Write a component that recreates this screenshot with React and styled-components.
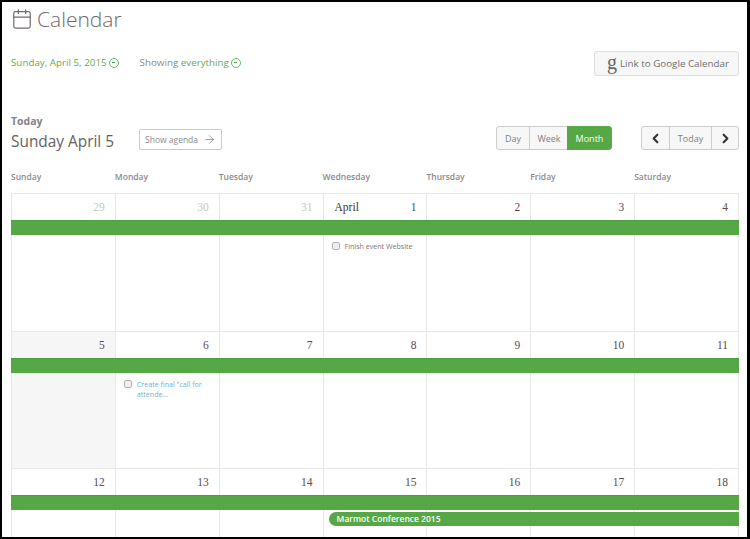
import React from 'react';
import styled, { createGlobalStyle } from 'styled-components';
import { Calendar, ChevronLeft, ChevronRight, ArrowRight } from 'lucide-react';

const GlobalStyle = createGlobalStyle`
  html, body {
    margin: 0;
    padding: 0;
    background: #fff;
  }
  body {
    font-family: "Open Sans", "Liberation Sans", sans-serif;
  }
`;

const weekdays = ['Sunday', 'Monday', 'Tuesday', 'Wednesday', 'Thursday', 'Friday', 'Saturday'];

const weeks = [
  {
    days: [
      { n: 29, muted: true },
      { n: 30, muted: true },
      { n: 31, muted: true },
      { n: 1, month: 'April' },
      { n: 2 },
      { n: 3 },
      { n: 4 },
    ],
    tasks: { 3: { text: 'Finish event Website' } },
  },
  {
    days: [{ n: 5, today: true }, { n: 6 }, { n: 7 }, { n: 8 }, { n: 9 }, { n: 10 }, { n: 11 }],
    tasks: { 1: { text: 'Create final "call for attende...', link: true } },
  },
  {
    days: [{ n: 12 }, { n: 13 }, { n: 14 }, { n: 15 }, { n: 16 }, { n: 17 }, { n: 18 }],
    tasks: {},
    event: 'Marmot Conference 2015',
  },
];

const App = () => {
  return (
    <>
      <GlobalStyle />
      <Frame>
        <TitleRow>
          <Calendar size={22} strokeWidth={1.3} color="#6f6a6d" />
          <Title>Calendar</Title>
        </TitleRow>

        <FilterRow>
          <Filters>
            <Filter>
              <Green>Sunday, April 5, 2015</Green>
              <Toggle />
            </Filter>
            <Filter>
              <span>
                Showing <Green>everything</Green>
              </span>
              <Toggle />
            </Filter>
          </Filters>
          <GoogleButton>
            <GoogleG>g</GoogleG>
            Link to Google Calendar
          </GoogleButton>
        </FilterRow>

        <Toolbar>
          <TodayBlock>
            <TodayLabel>Today</TodayLabel>
            <DateRow>
              <DateTitle>Sunday April 5</DateTitle>
              <AgendaButton>
                Show agenda
                <ArrowRight size={13} strokeWidth={1.4} color="#77777a" />
              </AgendaButton>
            </DateRow>
          </TodayBlock>
          <Controls>
            <ButtonGroup>
              <GroupButton $w={32}>Day</GroupButton>
              <GroupButton $w={39}>Week</GroupButton>
              <GroupButton $w={43} $active>Month</GroupButton>
            </ButtonGroup>
            <ButtonGroup>
              <GroupButton $w={27}>
                <ChevronLeft size={15} strokeWidth={3.4} color="#333" />
              </GroupButton>
              <GroupButton $w={42}>Today</GroupButton>
              <GroupButton $w={27}>
                <ChevronRight size={15} strokeWidth={3.4} color="#333" />
              </GroupButton>
            </ButtonGroup>
          </Controls>
        </Toolbar>

        <WeekdayRow>
          {weekdays.map((d) => (
            <Weekday key={d}>{d}</Weekday>
          ))}
        </WeekdayRow>

        <Month>
          {weeks.map((week) => (
            <Week key={week.days[0].n}>
              {week.days.map((d) => (
                <DayHead key={d.n} $today={d.today}>
                  {d.month && <MonthName>{d.month}</MonthName>}
                  <DayNumber $muted={d.muted}>{d.n}</DayNumber>
                </DayHead>
              ))}
              <AllDayBar />
              {week.event && <EventBar>{week.event}</EventBar>}
              {week.days.map((d, i) => (
                <DayBody key={d.n} $today={d.today}>
                  {week.tasks[i] && (
                    <Task $link={week.tasks[i].link}>
                      <Check />
                      <span>{week.tasks[i].text}</span>
                    </Task>
                  )}
                </DayBody>
              ))}
            </Week>
          ))}
        </Month>
      </Frame>
    </>
  );
};

export default App;

const Frame = styled.div`
  width: 750px;
  height: 539px;
  box-sizing: border-box;
  overflow: hidden;
  border: solid #000;
  border-width: 2px 3px 2px 2px;
  padding: 0 8px 0 9px;
  background: #fff;
  color: #6d696c;
`;

const TitleRow = styled.div`
  display: flex;
  align-items: center;
  gap: 4px;
  height: 34px;
`;

const Title = styled.h1`
  margin: 0;
  font-size: 21px;
  line-height: 34px;
  font-weight: 300;
  color: #6f6a6d;
`;

const FilterRow = styled.div`
  display: flex;
  justify-content: space-between;
  align-items: center;
  height: 25px;
  margin-top: 15px;
`;

const Filters = styled.div`
  display: flex;
  gap: 21px;
  margin-top: -2px;
`;

const Filter = styled.div`
  display: flex;
  align-items: center;
  gap: 2px;
  font-size: 9.8px;
  color: #8a8a8a;
`;

const Green = styled.span`
  color: #6aa84f;
`;

const Toggle = styled.span`
  width: 8px;
  height: 8px;
  border: 1px solid #62bb62;
  border-radius: 50%;
  display: flex;
  align-items: center;
  justify-content: center;

  &::after {
    content: '';
    width: 3px;
    height: 1px;
    background: #4f9f4f;
  }
`;

const GoogleButton = styled.div`
  width: 145px;
  height: 25px;
  box-sizing: border-box;
  display: flex;
  align-items: center;
  justify-content: flex-end;
  gap: 3px;
  padding-right: 9px;
  background: #f7f7f7;
  border: 1px solid #ddd;
  border-radius: 3px;
  font-size: 9.8px;
  white-space: nowrap;
  color: #6f6f6f;
`;

const GoogleG = styled.span`
  font-family: "Liberation Serif", serif;
  font-size: 20px;
  line-height: 18px;
  margin-top: -4px;
  color: #666;
`;

const Toolbar = styled.div`
  display: flex;
  justify-content: space-between;
  align-items: flex-end;
  height: 37px;
  margin-top: 37px;
`;

const TodayBlock = styled.div`
  align-self: flex-start;
  display: flex;
  flex-direction: column;
  padding-top: 1px;
`;

const TodayLabel = styled.div`
  font-size: 10.5px;
  line-height: 14px;
  font-weight: 700;
  color: #85828a;
`;

const DateRow = styled.div`
  display: flex;
  align-items: flex-start;
  gap: 25px;
`;

const DateTitle = styled.div`
  font-size: 15.4px;
  line-height: 28px;
  color: #646163;
`;

const AgendaButton = styled.div`
  width: 83px;
  height: 21px;
  margin-top: 1px;
  box-sizing: border-box;
  display: flex;
  align-items: center;
  justify-content: space-between;
  padding: 0 5px;
  border: 1px solid #c9c9cf;
  border-radius: 2px;
  font-size: 8.5px;
  color: #8b8b8b;
`;

const Controls = styled.div`
  display: flex;
  gap: 29px;
`;

const ButtonGroup = styled.div`
  display: flex;
  height: 24px;
  box-sizing: border-box;
  border: 1px solid #ccc;
  border-radius: 3px;
  background: #f7f7f7;
`;

const GroupButton = styled.div`
  width: ${(p) => p.$w}px;
  box-sizing: border-box;
  display: flex;
  align-items: center;
  justify-content: center;
  font-size: 9px;
  color: ${(p) => (p.$active ? '#fff' : '#808080')};
  background: ${(p) => (p.$active ? '#55a845' : 'transparent')};
  box-shadow: ${(p) => (p.$active ? '0 0 0 1px #55a845' : 'none')};
  border-radius: ${(p) => (p.$active ? '0 3px 3px 0' : '0')};
  border-left: ${(p) => (p.$active ? '0' : '1px solid #ccc')};

  &:first-child {
    border-left: 0;
  }
`;

const WeekdayRow = styled.div`
  display: grid;
  grid-template-columns: repeat(7, 103.86px);
  margin-top: 20px;
  height: 23px;
`;

const Weekday = styled.div`
  font-size: 8.5px;
  line-height: 14px;
  font-weight: 600;
  color: #8c8a90;
`;

const Month = styled.div`
  width: 728px;
  box-sizing: border-box;
  border-top: 1px solid #e8e8e8;
  border-right: 1px solid #e8e8e8;
`;

const Week = styled.div`
  display: grid;
  grid-template-columns: repeat(7, 1fr);
  grid-template-rows: 26px 15px auto;
  border-bottom: 1px solid #e8e8e8;
`;

const DayHead = styled.div`
  display: flex;
  justify-content: space-between;
  align-items: center;
  padding: 0 10px 0 11px;
  border-left: 1px solid #e8e8e8;
  background: ${(p) => (p.$today ? '#f6f6f6' : '#fff')};
`;

const MonthName = styled.span`
  font-family: "Liberation Serif", serif;
  font-size: 11.5px;
  color: #3a3436;
`;

const DayNumber = styled.span`
  font-family: "Liberation Serif", serif;
  font-size: 11.5px;
  margin-left: auto;
  color: ${(p) => (p.$muted ? '#c4c4c8' : '#5c4a54')};
`;

const AllDayBar = styled.div`
  grid-column: 1 / -1;
  margin-right: -1px;
  background: #55a845;
  border-top: 1px solid #4b9f3e;
  box-sizing: border-box;
`;

const EventBar = styled.div`
  grid-column: 4 / -1;
  height: 14px;
  margin: 2px -1px -16px 6px;
  padding-left: 8px;
  border-radius: 7px 0 0 7px;
  background: #55a845;
  font-size: 8.5px;
  line-height: 14px;
  font-weight: 600;
  color: #fff;
  position: relative;
`;

const DayBody = styled.div`
  box-sizing: border-box;
  height: 95.5px;
  border-left: 1px solid #e8e8e8;
  padding: 6px 8px;
  background: ${(p) => (p.$today ? '#f6f6f6' : '#fff')};
`;

const Task = styled.div`
  display: flex;
  gap: 5px;
  font-size: 7.1px;
  line-height: 10px;
  color: ${(p) => (p.$link ? '#6cb4cc' : '#77777b')};
`;

const Check = styled.span`
  flex: none;
  width: 6px;
  height: 6px;
  margin-top: 1px;
  background: #eee;
  border: 1px solid #b4b4b4;
  border-radius: 2px;
`;
